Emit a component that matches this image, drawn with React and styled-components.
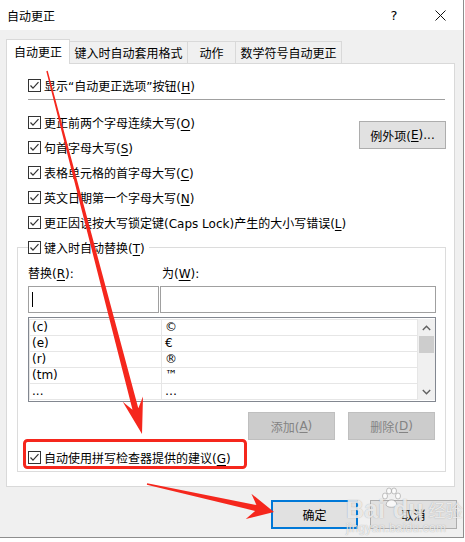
import React from 'react';
import styled, { createGlobalStyle } from 'styled-components';

const GlobalStyle = createGlobalStyle`
  *, *::before, *::after { box-sizing: border-box; }
  html, body { margin: 0; padding: 0; background: #fff; }
  body {
    font-family: "DejaVu Sans", "Noto Sans CJK SC", sans-serif;
    font-size: 12px;
    color: #000;
  }
`;

const Stage = styled.div`
  position: relative;
  width: 465px;
  height: 542px;
  overflow: hidden;
`;

const Window = styled.div`
  width: 464px;
  height: 538px;
  background: #f0f0f0;
  border-right: 1px solid #8e8e8e;
  border-bottom: 1px solid #8e8e8e;
  display: flex;
  flex-direction: column;
`;

const TitleBar = styled.div`
  height: 30px;
  background: #fff;
  display: flex;
  align-items: center;
  padding-left: 7px;
  flex-shrink: 0;
`;

const Title = styled.span`
  flex: 1;
`;

const CaptionButton = styled.div`
  width: 46px;
  height: 30px;
  display: flex;
  align-items: center;
  justify-content: center;
  font-size: 13px;
`;

const Body = styled.div`
  flex: 1;
  padding: 9px 8px 0 6px;
  display: flex;
  flex-direction: column;
`;

const TabStrip = styled.div`
  display: flex;
  align-items: flex-end;
  height: 24px;
  position: relative;
  z-index: 1;
`;

const Tab = styled.div`
  width: ${(p) => p.$w}px;
  height: ${(p) => (p.$active ? 25 : 22)}px;
  margin-bottom: ${(p) => (p.$active ? -1 : 0)}px;
  margin-left: ${(p) => (p.$first ? 0 : -1)}px;
  background: ${(p) => (p.$active ? '#fff' : '#f0f0f0')};
  border: 1px solid #d9d9d9;
  border-bottom: none;
  display: flex;
  align-items: center;
  justify-content: center;
  padding-bottom: ${(p) => (p.$active ? 1 : 0)}px;
  font-family: "Noto Sans CJK SC", sans-serif;
  position: relative;
  z-index: ${(p) => (p.$active ? 2 : 1)};
`;

const Panel = styled.div`
  height: 424px;
  background: #fff;
  border: 1px solid #d9d9d9;
  padding: 9px 8px 0 10px;
  display: flex;
  flex-direction: column;
`;

const CheckRow = styled.div`
  display: flex;
  align-items: center;
  gap: 3px;
  height: ${(p) => p.$h || 25}px;
  margin-left: ${(p) => p.$indent ?? 11}px;
  white-space: nowrap;
`;

const Box = styled.span`
  width: 13px;
  height: 13px;
  border: 1px solid #333;
  background: #fff;
  display: inline-flex;
  flex-shrink: 0;
`;

const Acc = styled.u`
  text-underline-offset: 2px;
  text-decoration-thickness: 1px;
`;

const Separator = styled.div`
  height: 1px;
  background: #a0a0a0;
  margin: 1px 1px 0 11px;
`;

const OptionBlock = styled.div`
  display: flex;
  justify-content: space-between;
  margin-top: 10px;
`;

const OptionList = styled.div`
  display: flex;
  flex-direction: column;
`;

const Button = styled.div`
  width: 87px;
  height: ${(p) => p.$h || 28}px;
  margin-top: ${(p) => p.$mt || 0}px;
  background: ${(p) => (p.$disabled ? '#cccccc' : '#e1e1e1')};
  color: ${(p) => (p.$disabled ? '#838383' : '#000')};
  border: ${(p) =>
    p.$default ? '2px solid #0078d7' : `1px solid ${p.$disabled ? '#bfbfbf' : '#adadad'}`};
  display: flex;
  align-items: center;
  justify-content: center;
  flex-shrink: 0;
`;

const Group = styled.fieldset`
  margin: 0;
  height: 237px;
  border: 1px solid #dcdcdc;
  padding: 0 9px 3px 10px;
  display: flex;
  flex-direction: column;
`;

const Legend = styled.legend`
  padding: 0 4px 0 0;
  height: 24px;
`;

const FieldGrid = styled.div`
  display: grid;
  grid-template-columns: 131px 1fr;
  column-gap: 1px;
`;

const FieldLabel = styled.div`
  height: 16px;
  line-height: 16px;
  margin-top: 7px;
  padding-left: ${(p) => p.$pad || 0}px;
`;

const Input = styled.div`
  height: 27px;
  margin-top: 4px;
  border: 1px solid #a0a0a0;
  background: #fff;
  display: flex;
  align-items: center;
  padding-left: 3px;
`;

const Caret = styled.span`
  width: 1px;
  height: 15px;
  background: #000;
`;

const List = styled.div`
  height: 85px;
  margin-top: 4px;
  border: 1px solid #828790;
  background: #fff;
  display: flex;
  padding: 1px 0 1px 0;
`;

const ListBody = styled.div`
  flex: 1;
  border-top: 1px solid #e6e6e6;
  overflow: hidden;
  display: grid;
  grid-template-columns: 133px 1fr;
  grid-auto-rows: 16px;
`;

const Cell = styled.div`
  border-bottom: 1px solid #e6e6e6;
  border-right: 1px solid #e6e6e6;
  border-left: ${(p) => (p.$first ? '1px solid #e6e6e6' : 'none')};
  padding-left: ${(p) => (p.$first ? 2 : 3)}px;
  line-height: 15px;
  white-space: nowrap;
`;

const ScrollBar = styled.div`
  width: 17px;
  background: #f0f0f0;
  display: flex;
  flex-direction: column;
  align-items: center;
`;

const ScrollArrow = styled.div`
  height: 17px;
  width: 17px;
  display: flex;
  align-items: center;
  justify-content: center;
`;

const Thumb = styled.div`
  width: 15px;
  height: 17px;
  background: #cdcdcd;
`;

const ButtonRow = styled.div`
  display: flex;
  justify-content: flex-end;
  gap: 13px;
  margin-top: 10px;
  margin-right: 1px;
`;

const Footer = styled.div`
  display: flex;
  justify-content: flex-end;
  gap: 12px;
  margin-top: 13px;
  margin-right: -2px;
`;

const Overlay = styled.svg`
  position: absolute;
  left: 0;
  top: 0;
  pointer-events: none;
`;

const Watermark = styled.div`
  position: absolute;
  left: 346px;
  top: 487px;
  color: rgba(255, 255, 255, 0.75);
  text-shadow: 0 0 1px rgba(110, 110, 110, 0.6);
  font-family: "Liberation Sans", sans-serif;
  pointer-events: none;
`;

const MarkTop = styled.div`
  display: flex;
  align-items: flex-end;
  font-size: 25px;
  font-weight: bold;
  line-height: 28px;
  gap: 1px;
`;

const MarkCn = styled.span`
  font-family: "Noto Sans CJK SC", sans-serif;
  font-size: 17px;
  font-weight: normal;
  margin-left: 4px;
  line-height: 26px;
`;

const MarkUrl = styled.div`
  font-size: 12px;
  margin-top: -2px;
  letter-spacing: 0.2px;
`;

const Check = () => (
  <Box>
    <svg width="11" height="11" viewBox="0 0 11 11">
      <polyline points="1.5,5.5 4,8.2 9.5,2.2" fill="none" stroke="#333" strokeWidth="1.2" />
    </svg>
  </Box>
);

function arrow(x1, y1, x2, y2, w0, w1, headLen, headW) {
  const dx = x2 - x1;
  const dy = y2 - y1;
  const len = Math.hypot(dx, dy);
  const ux = dx / len;
  const uy = dy / len;
  const nx = -uy;
  const ny = ux;
  const at = (d, s) => `${(x2 - ux * d + nx * s).toFixed(1)},${(y2 - uy * d + ny * s).toFixed(1)}`;
  const neck = headLen * 0.72;
  return [
    at(len, w0 / 2),
    at(neck, w1 / 2),
    at(headLen, headW / 2),
    `${x2},${y2}`,
    at(headLen, -headW / 2),
    at(neck, -w1 / 2),
    at(len, -w0 / 2),
  ].join(' ');
}

const options = [
  ['更正前两个字母连续大写', 'O'],
  ['句首字母大写', 'S'],
  ['表格单元格的首字母大写', 'C'],
  ['英文日期第一个字母大写', 'N'],
  ['更正因误按大写锁定键(Caps Lock)产生的大小写错误', 'L'],
];

const entries = [
  ['(c)', '©'],
  ['(e)', '€'],
  ['(r)', '®'],
  ['(tm)', '™'],
  ['...', '…'],
];

const tabs = [
  ['自动更正', 64],
  ['键入时自动套用格式', 119],
  ['动作', 49],
  ['数学符号自动更正', 107],
];

export default function App() {
  return (
    <Stage>
      <GlobalStyle />
      <Window>
        <TitleBar>
          <Title>自动更正</Title>
          <CaptionButton>?</CaptionButton>
          <CaptionButton>
            <svg width="11" height="11" viewBox="0 0 11 11">
              <path d="M0.5 0.5 L10.5 10.5 M10.5 0.5 L0.5 10.5" stroke="#111" strokeWidth="1" />
            </svg>
          </CaptionButton>
        </TitleBar>
        <Body>
          <TabStrip>
            {tabs.map(([label, w], i) => (
              <Tab key={label} $w={w} $active={i === 0} $first={i === 0}>
                {label}
              </Tab>
            ))}
          </TabStrip>
          <Panel>
            <CheckRow>
              <Check />
              <span>
                显示“自动更正选项”按钮(<Acc>H</Acc>)
              </span>
            </CheckRow>
            <Separator />
            <OptionBlock>
              <OptionList>
                {options.map(([text, key]) => (
                  <CheckRow key={key}>
                    <Check />
                    <span>
                      {text}(<Acc>{key}</Acc>)
                    </span>
                  </CheckRow>
                ))}
              </OptionList>
              <Button $mt={11}>
                例外项(<Acc>E</Acc>)...
              </Button>
            </OptionBlock>
            <Group>
              <Legend>
                <CheckRow $h={24} $indent={0}>
                  <Check />
                  <span>
                    键入时自动替换(<Acc>T</Acc>)
                  </span>
                </CheckRow>
              </Legend>
              <FieldGrid>
                <FieldLabel>
                  替换(<Acc>R</Acc>):
                </FieldLabel>
                <FieldLabel $pad={2}>
                  为(<Acc>W</Acc>):
                </FieldLabel>
                <Input>
                  <Caret />
                </Input>
                <Input />
              </FieldGrid>
              <List>
                <ListBody>
                  {entries.map(([from, to]) => (
                    <React.Fragment key={from}>
                      <Cell $first>{from}</Cell>
                      <Cell>{to}</Cell>
                    </React.Fragment>
                  ))}
                </ListBody>
                <ScrollBar>
                  <ScrollArrow>
                    <svg width="9" height="6" viewBox="0 0 9 6">
                      <polyline points="0.8,5 4.5,1.3 8.2,5" fill="none" stroke="#606060" strokeWidth="1.4" />
                    </svg>
                  </ScrollArrow>
                  <Thumb />
                  <div style={{ flex: 1 }} />
                  <ScrollArrow>
                    <svg width="9" height="6" viewBox="0 0 9 6">
                      <polyline points="0.8,1 4.5,4.7 8.2,1" fill="none" stroke="#606060" strokeWidth="1.4" />
                    </svg>
                  </ScrollArrow>
                </ScrollBar>
              </List>
              <ButtonRow>
                <Button $disabled>
                  添加(<Acc>A</Acc>)
                </Button>
                <Button $disabled>
                  删除(<Acc>D</Acc>)
                </Button>
              </ButtonRow>
              <CheckRow $h={24} style={{ marginTop: 5 }} $indent={0}>
                <Check />
                <span>
                  自动使用拼写检查器提供的建议(<Acc>G</Acc>)
                </span>
              </CheckRow>
            </Group>
          </Panel>
          <Footer>
            <Button $default $h={29}>确定</Button>
            <Button $h={29}>取消</Button>
          </Footer>
        </Body>
      </Window>
      <Watermark>
        <MarkTop>
          <span>Bai</span>
          <svg width="22" height="22" viewBox="0 0 22 22" style={{ marginBottom: 14, marginLeft: -6 }}>
            <g fill="rgba(255,255,255,0.75)" stroke="rgba(110,110,110,0.5)" strokeWidth="0.8">
              <ellipse cx="5" cy="9" rx="2.5" ry="3" />
              <ellipse cx="9" cy="4" rx="2.5" ry="3" />
              <ellipse cx="14" cy="4" rx="2.5" ry="3" />
              <ellipse cx="18" cy="9" rx="2.5" ry="3" />
              <path d="M6 18 C7 11 16 11 17 18 C16 21 7 21 6 18 Z" />
            </g>
          </svg>
          <span style={{ marginLeft: -10 }}>du</span>
          <MarkCn>经验</MarkCn>
        </MarkTop>
        <MarkUrl>jingyan.baidu.com</MarkUrl>
      </Watermark>
      <Overlay width="465" height="542" viewBox="0 0 465 542">
        <rect x="24.5" y="440.5" width="221" height="27" rx="3" fill="none" stroke="#f5271d" strokeWidth="3" />
        <polygon points={arrow(47, 71, 142, 434, 1.5, 6, 36, 21)} fill="#f5271d" />
        <polygon points={arrow(147, 484, 274, 512, 1.5, 6, 26, 26)} fill="#f5271d" />
      </Overlay>
    </Stage>
  );
}
